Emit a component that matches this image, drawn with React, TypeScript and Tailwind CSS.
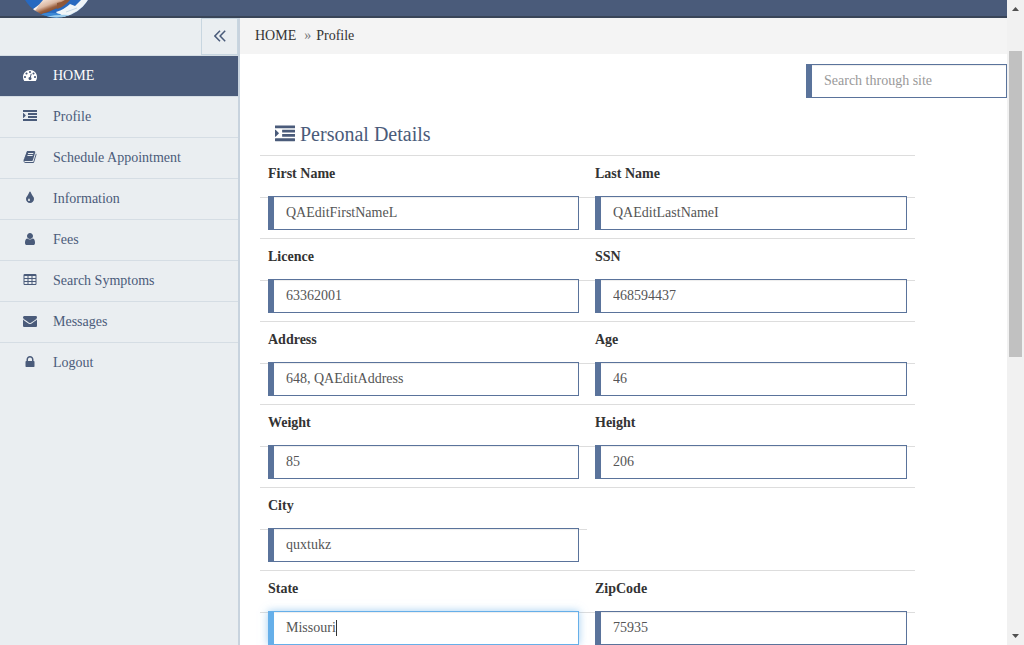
import React from "react";

type IconProps = { className?: string };

const PATHS = {
  dashboard:
    "M384 1152q0-53-37.5-90.5t-90.5-37.5-90.5 37.5-37.5 90.5 37.5 90.5 90.5 37.5 90.5-37.5 37.5-90.5zm192-448q0-53-37.5-90.5t-90.5-37.5-90.5 37.5-37.5 90.5 37.5 90.5 90.5 37.5 90.5-37.5 37.5-90.5zm428 481l101-382q6-26-7.5-48.5t-38.5-29.5-48 6.5-30 39.5l-101 382q-60 5-107 43.5t-63 98.5q-20 77 20 146t117 89 146-20 89-117q16-60-6-117t-72-91zm660-33q0-53-37.5-90.5t-90.5-37.5-90.5 37.5-37.5 90.5 37.5 90.5 90.5 37.5 90.5-37.5 37.5-90.5zm-640-640q0-53-37.5-90.5t-90.5-37.5-90.5 37.5-37.5 90.5 37.5 90.5 90.5 37.5 90.5-37.5 37.5-90.5zm448 192q0-53-37.5-90.5t-90.5-37.5-90.5 37.5-37.5 90.5 37.5 90.5 90.5 37.5 90.5-37.5 37.5-90.5zm320 448q0 261-141 483-19 29-54 29h-1402q-35 0-54-29-141-221-141-483 0-182 71-348t191-286 286-191 348-71 348 71 286 191 191 286 71 348z",
  indent:
    "M352 832q0 14-9 23l-288 288q-9 9-23 9-13 0-22.5-9.5t-9.5-22.5v-576q0-13 9.5-22.5t22.5-9.5q14 0 23 9l288 288q9 9 9 23zm1440 480v192q0 13-9.5 22.5t-22.5 9.5h-1728q-13 0-22.5-9.5t-9.5-22.5v-192q0-13 9.5-22.5t22.5-9.5h1728q13 0 22.5 9.5t9.5 22.5zm0-384v192q0 13-9.5 22.5t-22.5 9.5h-1088q-13 0-22.5-9.5t-9.5-22.5v-192q0-13 9.5-22.5t22.5-9.5h1088q13 0 22.5 9.5t9.5 22.5zm0-384v192q0 13-9.5 22.5t-22.5 9.5h-1088q-13 0-22.5-9.5t-9.5-22.5v-192q0-13 9.5-22.5t22.5-9.5h1088q13 0 22.5 9.5t9.5 22.5zm0-384v192q0 13-9.5 22.5t-22.5 9.5h-1728q-13 0-22.5-9.5t-9.5-22.5v-192q0-13 9.5-22.5t22.5-9.5h1728q13 0 22.5 9.5t9.5 22.5z",
  book: "M1703 478q40 57 18 129l-275 906q-19 64-76.5 107.5t-122.5 43.5h-923q-77 0-148.5-53.5t-99.5-131.5q-24-67-2-127 0-4 3-27t4-37q1-8-3-21.5t-3-19.5q2-11 8-21t16.5-23.5 16.5-23.5q23-38 45-91.5t30-91.5q3-10 .5-30t-.5-28q3-11 17-28t17-23q21-36 42-92t25-90q1-9-2.5-32t.5-28q4-13 22-30.5t22-22.5q19-26 42.5-84.5t27.5-96.5q1-8-3-25.5t-2-26.5q2-8 9-18t18-23 17-21q8-12 16.5-30.5t15-35 16-36 19.5-32 26.5-23.5 36-11.5 47.5 5.5l-1 3q38-9 51-9h761q74 0 114 56t18 130l-274 906q-36 119-71.5 153.5t-128.5 34.5h-869q-27 0-38 15-11 16-1 43 24 70 144 70h923q29 0 56-15.5t35-41.5l300-987q7-22 5-57 38 15 59 43zm-1064 2q-4 13 2 22.5t20 9.5h608q13 0 25.5-9.5t16.5-22.5l21-64q4-13-2-22.5t-20-9.5h-608q-13 0-25.5 9.5t-16.5 22.5zm-83 256q-4 13 2 22.5t20 9.5h608q13 0 25.5-9.5t16.5-22.5l21-64q4-13-2-22.5t-20-9.5h-608q-13 0-25.5 9.5t-16.5 22.5z",
  drop: "M896 1152q0-36-20-69-1-1-15.5-22.5t-25.5-38-25-44-21-50.5q-4-16-21-16t-21 16q-7 23-21 50.5t-25 44-25.5 38-15.5 22.5q-20 33-20 69 0 53 37.5 90.5t90.5 37.5 90.5-37.5 37.5-90.5zm512-128q0 212-150 362t-362 150-362-150-150-362q0-145 81-275 6-9 62.5-90.5t101-151 99.5-178 83-201.5q9-30 34-47t51-17 51.5 17 33.5 47q28 93 83 201.5t99.5 178 101 151 62.5 90.5q81 127 81 275z",
  user: "M1536 1399q0 109-62.5 187t-150.5 78h-854q-88 0-150.5-78t-62.5-187q0-85 8.5-160.5t31.5-152 58.5-131 94-89 134.5-34.5q131 128 313 128t313-128q76 0 134.5 34.5t94 89 58.5 131 31.5 152 8.5 160.5zm-256-887q0 159-112.5 271.5t-271.5 112.5-271.5-112.5-112.5-271.5 112.5-271.5 271.5-112.5 271.5 112.5 112.5 271.5z",
  table:
    "M224 128h1344q66 0 113 47t47 113v1088q0 66-47 113t-113 47h-1344q-66 0-113-47t-47-113v-1088q0-66 47-113t113-47zM192 384h384v256h-384zM704 384h384v256h-384zM1216 384h384v256h-384zM192 768h384v256h-384zM704 768h384v256h-384zM1216 768h384v256h-384zM192 1152h384v256h-384zM704 1152h384v256h-384zM1216 1152h384v256h-384z",
  envelope:
    "M1792 710v794q0 66-47 113t-113 47h-1472q-66 0-113-47t-47-113v-794q44 49 101 87 362 246 497 345 57 42 92.5 65.5t94.5 48 110 24.5h2q51 0 110-24.5t94.5-48 92.5-65.5q170-123 498-345 57-39 100-87zm0-294q0 79-49 151t-122 123q-376 261-468 325-10 7-42.5 31t-54 38.5-52 32.5-57.5 27-50 9h-2q-23 0-50-9t-57.5-27-52-32.5-54-38.5-42.5-31q-91-64-262-182.5t-205-142.5q-62-42-117-115.5t-55-136.5q0-78 41.5-130t118.5-52h1472q65 0 112.5 47t47.5 113z",
  lock: "M640 768h512v-192q0-106-75-181t-181-75-181 75-75 181v192zm832 96v576q0 40-28 68t-68 28h-960q-40 0-68-28t-28-68v-576q0-40 28-68t68-28h32v-192q0-184 132-316t316-132 316 132 132 316v192h32q40 0 68 28t28 68z",
};

type IconName = keyof typeof PATHS;

function Icon({ name, className }: IconProps & { name: IconName }) {
  return (
    <svg viewBox="0 0 1792 1792" fill="currentColor" fillRule="evenodd" aria-hidden="true" className={className}>
      <path d={PATHS[name]} />
    </svg>
  );
}

function Logo({ className }: IconProps) {
  return (
    <svg viewBox="18 -58 76 76" aria-hidden="true" className={className}>
      <defs>
        <clipPath id="disc">
          <circle cx="56.5" cy="-19.5" r="37" />
        </clipPath>
        <linearGradient id="skin" x1="45" y1="0" x2="50" y2="13" gradientUnits="userSpaceOnUse">
          <stop offset="0" stopColor="#f0dcd0" />
          <stop offset="0.4" stopColor="#dcb8a2" />
          <stop offset="0.7" stopColor="#9a5f3e" />
          <stop offset="1" stopColor="#7d482c" />
        </linearGradient>
      </defs>
      <g clipPath="url(#disc)">
        <rect x="18" y="-58" width="76" height="76" fill="#2769c0" />
        <path d="M27 13Q36 9 43 0V-4H66V1Q62 7 55 9 49 12 42 14L30 16Z" fill="url(#skin)" />
        <path d="M27 12Q34 9 39 5 36 11 30 14Z" fill="#f8f1ed" />
        <path d="M57 3Q62 3 66-1L70 0Q64 7 57 9Z" fill="#8f5738" />
        <path d="M56 12Q65 9 70 4L75 6 82-1H92V10L76 18H61Z" fill="#f0f5f8" />
        <path d="M66 12 77 8M70 15 80 10" stroke="#c4d9e8" strokeWidth="1" />
        <path d="M38 15Q50 11 60 14L66 18H42Z" fill="#3b87d4" />
        <path d="M45 17Q58 14 70 15L66 18H45Z" fill="#9ccdec" />
      </g>
    </svg>
  );
}

const MENU: { label: string; icon: IconName; active?: boolean }[] = [
  { label: "HOME", icon: "dashboard", active: true },
  { label: "Profile", icon: "indent" },
  { label: "Schedule Appointment", icon: "book" },
  { label: "Information", icon: "drop" },
  { label: "Fees", icon: "user" },
  { label: "Search Symptoms", icon: "table" },
  { label: "Messages", icon: "envelope" },
  { label: "Logout", icon: "lock" },
];

type FieldData = { label: string; value: string; focused?: boolean };

const ROWS: FieldData[][] = [
  [
    { label: "First Name", value: "QAEditFirstNameL" },
    { label: "Last Name", value: "QAEditLastNameI" },
  ],
  [
    { label: "Licence", value: "63362001" },
    { label: "SSN", value: "468594437" },
  ],
  [
    { label: "Address", value: "648, QAEditAddress" },
    { label: "Age", value: "46" },
  ],
  [
    { label: "Weight", value: "85" },
    { label: "Height", value: "206" },
  ],
  [{ label: "City", value: "quxtukz" }],
  [
    { label: "State", value: "Missouri", focused: true },
    { label: "ZipCode", value: "75935" },
  ],
];

const INPUT = "block h-[34px] w-full border border-l-[6px] bg-white px-3 text-sm text-[#555] outline-none placeholder:text-[#999]";
const INPUT_IDLE = "border-[#5a739b] shadow-[inset_0_1px_1px_rgba(0,0,0,0.075)]";
const INPUT_FOCUS = "border-[#66afe9] shadow-[inset_0_1px_1px_rgba(0,0,0,0.075),0_0_8px_rgba(102,175,233,0.6)]";

function Field({ label, value, focused }: FieldData) {
  const id = label.toLowerCase().replace(" ", "-");
  return (
    <div>
      <div className="h-[41px] px-2 pt-2">
        <label htmlFor={id} className="block text-sm leading-5 font-bold text-[#333]">
          {label}
        </label>
      </div>
      <div className="border-t border-[#ddd] px-2 pb-2">
        <div className="relative -mt-0.5">
          <input id={id} type="text" defaultValue={value} className={`${INPUT} ${focused ? INPUT_FOCUS : INPUT_IDLE}`} />
          {focused && <span className="absolute top-[9px] left-[68px] h-4 w-px bg-[#333]" />}
        </div>
      </div>
    </div>
  );
}

function Sidebar() {
  return (
    <nav className="w-60 shrink-0 border-r-2 border-[#c8d3de] bg-[#eaeef1]">
      <div className="flex h-[37px] justify-end">
        <button type="button" aria-label="Collapse menu" className="flex w-[37px] items-center justify-center border border-[#c8d6e0] pb-0.5 text-[#4a5b7a]">
          <svg viewBox="0 0 12 12" fill="none" stroke="currentColor" strokeWidth="1.5" className="size-3">
            <path d="M6 .8.9 6 6 11.2M11.2.8 6.1 6l5.1 5.2" />
          </svg>
        </button>
      </div>
      <ul>
        {MENU.map((item) => (
          <li key={item.label} className="border-t border-[#d5dde4]">
            <a
              href="#"
              className={`flex h-10 items-center gap-4 pl-[23px] text-sm leading-5 ${item.active ? "bg-[#4a5b7a] text-white" : "text-[#4a5b7a]"}`}
            >
              <Icon name={item.icon} className="mb-0.5 size-3.5 shrink-0" />
              {item.label}
            </a>
          </li>
        ))}
      </ul>
    </nav>
  );
}

function Scrollbar() {
  return (
    <div className="flex w-[17px] shrink-0 flex-col items-center bg-[#f1f1f1] py-[7px]" aria-hidden="true">
      <svg viewBox="0 0 7 4" className="h-1 w-[7px]" fill="#505050">
        <path d="M3.5 0 7 4H0Z" />
      </svg>
      <div className="flex w-full grow flex-col px-0.5">
        <div className="grow-[40]" />
        <div className="grow-[306] bg-[#c1c1c1]" />
        <div className="grow-[277]" />
      </div>
      <svg viewBox="0 0 7 4" className="h-1 w-[7px]" fill="#505050">
        <path d="M0 0H7L3.5 4Z" />
      </svg>
    </div>
  );
}

export default function App() {
  return (
    <div className="flex h-screen overflow-hidden bg-white font-['Liberation_Serif',serif]">
      <div className="flex min-w-0 grow flex-col">
        <header className="relative h-[18px] shrink-0 border-b-2 border-[#394558] bg-[#4a5b7a]">
          <Logo className="absolute bottom-[-2px] left-[18px] size-[76px]" />
        </header>
        <div className="flex min-h-0 grow">
          <Sidebar />
          <main className="min-w-0 grow overflow-hidden">
            <div className="flex h-9 items-center gap-2 bg-[#f4f4f4] pl-[15px] text-sm text-[#333]">
              <a href="#">HOME</a>
              <span className="flex gap-[5px]">
                <span className="text-[#777]">»</span>
                <span>Profile</span>
              </span>
            </div>
            <div className="flex justify-end pt-2.5">
              <div className="w-[201px]">
                <input type="search" aria-label="Search through site" placeholder="Search through site" className={`${INPUT} ${INPUT_IDLE}`} />
              </div>
            </div>
            <section className="mr-[92px] ml-5 pt-6">
              <h1 className="flex items-center gap-[5px] pb-[9px] pl-[15px] text-xl leading-6 text-[#4a5b7a]">
                <Icon name="indent" className="size-5" />
                Personal Details
              </h1>
              <form>
                {ROWS.map((row) => (
                  <div key={row[0].label} className="grid grid-cols-[327fr_328fr] border-t border-[#ddd]">
                    {row.map((field) => (
                      <Field key={field.label} {...field} />
                    ))}
                  </div>
                ))}
              </form>
            </section>
          </main>
        </div>
      </div>
      <Scrollbar />
    </div>
  );
}
